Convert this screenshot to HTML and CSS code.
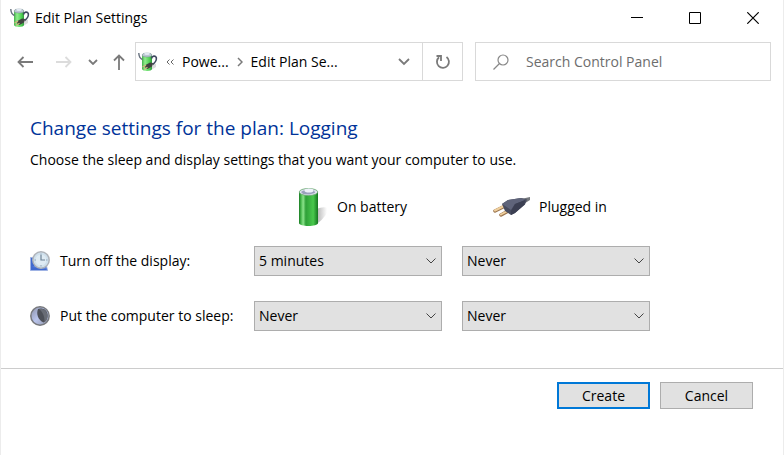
FILE: index.html
```html
<!DOCTYPE html>
<html lang="en">
<head>
    <meta charset="UTF-8">
    <meta name="viewport" content="width=device-width, initial-scale=1.0">
    <title>Edit Plan Settings</title>
    <link rel="stylesheet" href="styles.css">
</head>
<body>

<!-- Power icon, used in the title bar and the address bar -->
<svg class="sprite" aria-hidden="true">
    <defs>
        <linearGradient id="can" x1="0" x2="1" y1="0" y2="0">
            <stop offset="0" stop-color="#43b04a"/>
            <stop offset="0.3" stop-color="#8fee8c"/>
            <stop offset="0.75" stop-color="#4fcf54"/>
            <stop offset="1" stop-color="#2f9a3a"/>
        </linearGradient>
    </defs>
    <symbol id="power" viewBox="0 0 20 20">
        <path d="M13 18l5-3 0-3-4-1z" fill="#dcdcdc"/>
        <path d="M4 3v14c0 2.500 10 2.500 10 0V3z" fill="url(#can)"/>
        <ellipse cx="9" cy="3" rx="5" ry="2" fill="#b9c6d0" stroke="#6f8a86" stroke-width="0.500"/>
        <ellipse cx="9" cy="1.800" rx="2.800" ry="1.200" fill="#e3e9f2"/>
        <path d="M0.800 1c0 3.500 1.500 5.500 3.700 6.500" fill="none" stroke="#66707e" stroke-width="1.400"/>
        <path d="M13.500 6.500c0.500-3 4-3 4.800-1 0.600 3-0.800 5-3.800 7" fill="none" stroke="#3f4860" stroke-width="1.600"/>
        <path d="M7.500 13l4.500-2.500 3 0.500-1 3.500-4.500 2.500-2.500-1.500z" fill="#41433f"/>
        <path d="M8 13.200l-3.500 1.800M9.500 15.200l-3.500 2" stroke="#cdb47c" stroke-width="1.300"/>
    </symbol>
</svg>

<div class="window">
    <header class="title-bar">
        <svg class="small-icon" aria-hidden="true"><use href="#power"/></svg>
        <span class="title">Edit Plan Settings</span>
        <div class="window-controls">
            <button type="button" aria-label="Minimize">
                <svg width="12" height="12" viewBox="0 0 12 12"><path d="M0 5.500h12" stroke="#000"/></svg>
            </button>
            <button type="button" aria-label="Maximize">
                <svg width="12" height="12" viewBox="0 0 12 12"><path d="M0.500 0.500h11v11h-11z" fill="none" stroke="#000"/></svg>
            </button>
            <button type="button" aria-label="Close">
                <svg width="12" height="12" viewBox="0 0 12 12"><path d="M0.300 0.300l11.400 11.400M11.700 0.300L0.300 11.700" stroke="#000" stroke-width="1.200"/></svg>
            </button>
        </div>
    </header>

    <nav class="nav-bar">
        <div class="history">
            <button type="button" aria-label="Back">
                <svg width="16" height="12" viewBox="0 0 16 12"><path d="M16 6H1.500M6.500 1l-5 5 5 5" fill="none" stroke="#7a7a7a" stroke-width="1.800"/></svg>
            </button>
            <button type="button" aria-label="Forward" disabled>
                <svg width="16" height="12" viewBox="0 0 16 12"><path d="M0 6h14.500M9.500 1l5 5-5 5" fill="none" stroke="#dcdcdc" stroke-width="1.800"/></svg>
            </button>
            <button type="button" class="recent" aria-label="Recent locations">
                <svg width="10" height="6" viewBox="0 0 10 6"><path d="M1 1l4 4 4-4" fill="none" stroke="#7a7a7a" stroke-width="1.800"/></svg>
            </button>
            <button type="button" class="up" aria-label="Up">
                <svg width="12" height="16" viewBox="0 0 12 16"><path d="M6 16V1.500M1 6.500l5-5 5 5" fill="none" stroke="#7a7a7a" stroke-width="1.800"/></svg>
            </button>
        </div>

        <div class="address">
            <div class="crumbs">
                <svg class="small-icon" aria-hidden="true"><use href="#power"/></svg>
                <svg class="more" width="8" height="6" viewBox="0 0 8 6" aria-hidden="true"><path d="M3.500 0.500L1 3l2.500 2.500M7.500 0.500L5 3l2.500 2.500" fill="none" stroke="#666"/></svg>
                <a href="#">Powe...</a>
                <svg width="6" height="10" viewBox="0 0 6 10" aria-hidden="true"><path d="M1 1l4 4-4 4" fill="none" stroke="#7a7a7a" stroke-width="1.500"/></svg>
                <a href="#">Edit Plan Se...</a>
            </div>
            <button type="button" class="previous" aria-label="Previous locations">
                <svg width="12" height="8" viewBox="0 0 12 8"><path d="M1 1l5 5 5-5" fill="none" stroke="#7a7a7a" stroke-width="1.800"/></svg>
            </button>
            <button type="button" class="refresh" aria-label="Refresh">
                <svg width="16" height="16" viewBox="0 0 16 16"><path d="M11.500 3a6 6 0 1 1-7.500 0.300M1.500 2h4.500v5" fill="none" stroke="#7a7a7a" stroke-width="1.800"/></svg>
            </button>
        </div>

        <label class="search">
            <svg width="16" height="16" viewBox="0 0 16 16" aria-hidden="true"><circle cx="10" cy="6" r="5" fill="none" stroke="#888" stroke-width="1.200"/><path d="M6.500 9.500L0.500 15.500" stroke="#888" stroke-width="1.200"/></svg>
            <input type="text" placeholder="Search Control Panel" aria-label="Search Control Panel">
        </label>
    </nav>

    <main class="content">
        <h1>Change settings for the plan: Logging</h1>
        <p>Choose the sleep and display settings that you want your computer to use.</p>

        <div class="plan">
            <div class="source battery">
                <svg width="40" height="40" viewBox="0 0 40 40" aria-hidden="true">
                    <defs>
                        <linearGradient id="cell" x1="0" x2="1" y1="0" y2="0">
                            <stop offset="0" stop-color="#187a22"/>
                            <stop offset="0.1" stop-color="#45b64a"/>
                            <stop offset="0.22" stop-color="#8be38a"/>
                            <stop offset="0.36" stop-color="#2fa038"/>
                            <stop offset="0.75" stop-color="#48c84c"/>
                            <stop offset="1" stop-color="#14751f"/>
                        </linearGradient>
                        <linearGradient id="shade" x1="0" x2="1" y1="0" y2="0">
                            <stop offset="0" stop-color="#a8a8a8"/>
                            <stop offset="1" stop-color="#fff"/>
                        </linearGradient>
                    </defs>
                    <path d="M27 22q8-3 11-1v5q-4 7-12 12z" fill="url(#shade)"/>
                    <path d="M10 5v31c0 4 19 4 19 0V5z" fill="url(#cell)"/>
                    <ellipse cx="19.500" cy="5" rx="9.300" ry="3.500" fill="#dfe2ee" stroke="#67a76e" stroke-width="0.800"/>
                    <path d="M12 5q3-3 7-1l6-1 1 3-6 1.500-6-0.500z" fill="#9aa0bc"/>
                    <ellipse cx="20" cy="3.500" rx="4.500" ry="2" fill="#eff1fa"/>
                </svg>
                <span>On battery</span>
            </div>
            <div class="source plugged">
                <svg width="40" height="40" viewBox="0 0 40 40" aria-hidden="true">
                    <path d="M28 13q5-2 11-3v3l-8 5z" fill="#74777c"/>
                    <path d="M14 19L4 24M19 23L10 28" stroke="#9c7650" stroke-width="3.500" stroke-linecap="round"/>
                    <path d="M14 18.500L4 23.500M19 22.500L10 27.500" stroke="#efcf9d" stroke-width="2" stroke-linecap="round"/>
                    <path d="M11 17l6-4 13-2 6 1.500-2 5-10 8.500-4 2-6-4z" fill="#484c5f"/>
                    <path d="M11 17l6-4 13-2 5 2-11 4-4 6z" fill="#5f647a"/>
                    <path d="M20 24l4-7 10-4-1 5-9 8-4 2z" fill="#3b3f52"/>
                </svg>
                <span>Plugged in</span>
            </div>

            <div class="setting">
                <svg width="20" height="20" viewBox="0 0 20 20" aria-hidden="true">
                    <path d="M0.500 6.500h14l3 13h-17z" fill="#3f69cf" stroke="#9fb3e4"/>
                    <path d="M2 16l13-5 1 7z" fill="#5b82dc"/>
                    <circle cx="11" cy="9" r="8.200" fill="#cfe0ec" stroke="#b0b4ba" stroke-width="1.500"/>
                    <circle cx="11" cy="9" r="5.500" fill="#dfebf3"/>
                    <path d="M11 2.500v1.500M11 14v1.500M4.500 9H6M16 9h1.500" stroke="#94a7b8"/>
                    <path d="M11 4v5h4" fill="none" stroke="#6d8296" stroke-width="1.200"/>
                </svg>
                <span id="display-label">Turn off the display:</span>
            </div>
            <div class="dropdown">
                <select aria-labelledby="display-label">
                    <option>5 minutes</option>
                    <option>Never</option>
                </select>
                <svg width="10" height="6" viewBox="0 0 10 6" aria-hidden="true"><path d="M0.500 0.500L5 5l4.500-4.500" fill="none" stroke="#444"/></svg>
            </div>
            <div class="dropdown">
                <select aria-labelledby="display-label">
                    <option>Never</option>
                    <option>5 minutes</option>
                </select>
                <svg width="10" height="6" viewBox="0 0 10 6" aria-hidden="true"><path d="M0.500 0.500L5 5l4.500-4.500" fill="none" stroke="#444"/></svg>
            </div>

            <div class="setting">
                <svg width="20" height="20" viewBox="0 0 20 20" aria-hidden="true">
                    <defs>
                        <linearGradient id="moon" x1="0" x2="1" y1="0" y2="1">
                            <stop offset="0" stop-color="#8b90a6"/>
                            <stop offset="0.5" stop-color="#b9c4ec"/>
                            <stop offset="1" stop-color="#8e93a4"/>
                        </linearGradient>
                    </defs>
                    <circle cx="10" cy="10" r="9.200" fill="url(#moon)" stroke="#77797d" stroke-width="1.500"/>
                    <path d="M8 3c6-2 10 2 9.500 7-0.500 4-2 6-4 6.500C8 14 6 8 8 3z" fill="#4d5058"/>
                    <path d="M9 3c3 2 6 7 5.500 13 3-2 4-6 2.500-9-2-4-5-5-8-4z" fill="#686c75"/>
                </svg>
                <span id="sleep-label">Put the computer to sleep:</span>
            </div>
            <div class="dropdown">
                <select aria-labelledby="sleep-label">
                    <option>Never</option>
                    <option>5 minutes</option>
                </select>
                <svg width="10" height="6" viewBox="0 0 10 6" aria-hidden="true"><path d="M0.500 0.500L5 5l4.500-4.500" fill="none" stroke="#444"/></svg>
            </div>
            <div class="dropdown">
                <select aria-labelledby="sleep-label">
                    <option>Never</option>
                    <option>5 minutes</option>
                </select>
                <svg width="10" height="6" viewBox="0 0 10 6" aria-hidden="true"><path d="M0.500 0.500L5 5l4.500-4.500" fill="none" stroke="#444"/></svg>
            </div>
        </div>
    </main>

    <footer class="actions">
        <button type="button" class="primary">Create</button>
        <button type="button">Cancel</button>
    </footer>
</div>

</body>
</html>
```

FILE: styles.css
```css
* {
    box-sizing: border-box;
}
body {
    margin: 0;
    font-family: 'Open Sans', 'Noto Sans', sans-serif;
    font-size: 14px;
    line-height: 20px;
    color: #000;
    background: #fff;
}
svg {
    display: block;
    flex-shrink: 0;
}
button, input, select {
    font: inherit;
    color: inherit;
}
.sprite {
    position: absolute;
    width: 0;
    height: 0;
}
.window {
    min-height: 100vh;
    border: solid #ececec;
    border-width: 0 1px;
}
.small-icon {
    width: 20px;
    height: 20px;
}

/* Title bar */
.title-bar {
    display: flex;
    align-items: center;
    gap: 5px;
    height: 36px;
    padding: 0 1px 0 9px;
}
.window-controls {
    display: flex;
    align-self: stretch;
    margin-left: auto;
}
.window-controls button {
    display: flex;
    align-items: center;
    justify-content: center;
    width: 58px;
    padding: 0;
    border: none;
    background: none;
}
.window-controls button:hover {
    background: #e5e5e5;
}

/* Navigation bar */
.nav-bar {
    display: flex;
    align-items: stretch;
    height: 39px;
    margin-top: 6px;
    padding: 0 12px 0 16px;
}
.history {
    display: flex;
    align-items: center;
    width: 118px;
}
.history button, .address button {
    display: flex;
    align-items: center;
    justify-content: center;
    padding: 0;
    border: none;
    background: none;
}
.history button {
    margin-right: 23px;
}
.history button:nth-child(2) {
    margin-right: 16px;
}
.history .recent {
    margin-right: 15px;
}
.history .up {
    margin-right: 0;
}
.address {
    display: flex;
    flex: 1 1 328px;
    border: 1px solid #d9d9d9;
}
.crumbs {
    display: flex;
    flex: 1;
    align-items: center;
    padding-left: 2px;
}
.crumbs a {
    margin: 0 8px;
    color: #000;
    text-decoration: none;
}
.crumbs .more {
    margin-left: 8px;
}
.address .previous {
    width: 36px;
}
.address .refresh {
    width: 40px;
    border-left: 1px solid #d9d9d9;
}
.search {
    display: flex;
    flex: 1 1 296px;
    align-items: center;
    gap: 17px;
    margin-left: 12px;
    padding-left: 17px;
    border: 1px solid #d9d9d9;
}
.search input {
    flex: 1;
    min-width: 0;
    padding: 0;
    border: none;
    outline: none;
    background: none;
}
.search input::placeholder {
    color: #6d6d6d;
    opacity: 1;
}

/* Plan settings */
.content {
    padding: 34px 29px 37px;
}
.content h1 {
    margin: 0;
    font-size: 19px;
    font-weight: 400;
    line-height: 26px;
    color: #003399;
}
.content p {
    margin: 9px 0 17px;
}
.plan {
    display: grid;
    grid-template-columns: 204px 188px 188px;
    column-gap: 20px;
    align-items: center;
}
.source {
    display: flex;
    align-items: center;
    gap: 8px;
}
.battery {
    grid-column: 2;
    padding-left: 35px;
}
.plugged {
    padding-left: 29px;
}
.setting {
    display: flex;
    align-items: center;
    gap: 10px;
    margin-top: 19px;
    white-space: nowrap;
}
.dropdown {
    position: relative;
    margin-top: 19px;
}
.dropdown ~ .setting, .setting ~ .setting ~ .dropdown {
    margin-top: 25px;
}
.dropdown select {
    display: block;
    width: 100%;
    height: 30px;
    padding: 0 24px 0 4px;
    border: 1px solid #adadad;
    border-radius: 0;
    background: #e1e1e1;
    appearance: none;
}
.dropdown svg {
    position: absolute;
    top: 12px;
    right: 6px;
    pointer-events: none;
}

/* Buttons */
.actions {
    display: flex;
    justify-content: flex-end;
    gap: 10px;
    padding: 13px 30px;
    border-top: 1px solid #cccccc;
}
.actions button {
    width: 93px;
    height: 27px;
    padding: 0;
    border: 1px solid #adadad;
    background: #e1e1e1;
}
.actions .primary {
    border: 2px solid #0078d7;
}
.actions button:hover {
    background: #e5f1fb;
}
```
